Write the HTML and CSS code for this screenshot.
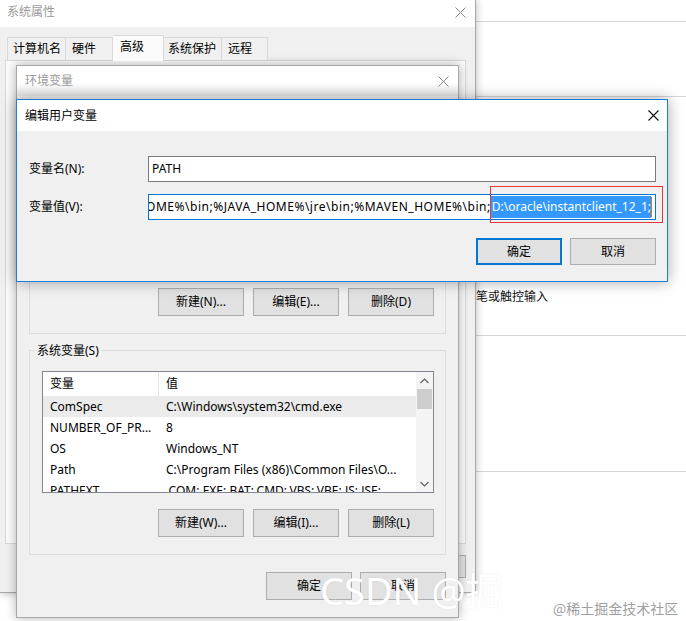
FILE: index.html
```html
<!DOCTYPE html>
<html lang="zh-CN">
<head>
<meta charset="utf-8">
<title>编辑用户变量</title>
<link rel="stylesheet" href="styles.css">
</head>
<body>
<div class="desktop">

  <div class="settings">
    <div class="s-line s1"></div>
    <div class="s-line s2"></div>
    <div class="s-line s3"><span class="s-text">笔或触控输入</span></div>
    <div class="s-line s4"></div>
  </div>

  <div class="win win-sys">
    <div class="titlebar inactive">
      <span>系统属性</span>
      <svg class="xicon" width="11" height="11" viewBox="0 0 11 11"><path d="M0.5 0.5L10.5 10.5M10.5 0.5L0.5 10.5" stroke="#8a8a8a" stroke-width="1"/></svg>
    </div>
    <div class="tabs">
      <div class="tab t1">计算机名</div>
      <div class="tab t2">硬件</div>
      <div class="tab t3 sel">高级</div>
      <div class="tab t4">系统保护</div>
      <div class="tab t5">远程</div>
    </div>
    <div class="panel"></div>
    <div class="sys-foot">
      <div class="btn">应用(A)</div>
    </div>
  </div>

  <div class="win win-env">
    <div class="env-title inactive">
      <span>环境变量</span>
      <svg class="xicon" width="11" height="11" viewBox="0 0 11 11"><path d="M0.5 0.5L10.5 10.5M10.5 0.5L0.5 10.5" stroke="#8a8a8a" stroke-width="1"/></svg>
    </div>
    <div class="env-body">
      <div class="group user-group">
        <div class="btn-row">
          <div class="btn tall">新建(N)...</div>
          <div class="btn tall">编辑(E)...</div>
          <div class="btn tall">删除(D)</div>
        </div>
      </div>
      <div class="group sys-group">
        <span class="legend">系统变量(S)</span>
        <div class="listbox">
          <div class="list-main">
            <div class="lrow head"><div class="c1">变量</div><div class="c2">值</div></div>
            <div class="lrow hl"><div class="c1">ComSpec</div><div class="c2">C:\Windows\system32\cmd.exe</div></div>
            <div class="lrow"><div class="c1">NUMBER_OF_PR...</div><div class="c2">8</div></div>
            <div class="lrow"><div class="c1">OS</div><div class="c2">Windows_NT</div></div>
            <div class="lrow"><div class="c1">Path</div><div class="c2">C:\Program Files (x86)\Common Files\O...</div></div>
            <div class="lrow"><div class="c1">PATHEXT</div><div class="c2">.COM;.EXE;.BAT;.CMD;.VBS;.VBE;.JS;.JSE;...</div></div>
          </div>
          <div class="vscroll">
            <div class="arrow">
              <svg width="9" height="6" viewBox="0 0 9 6"><path d="M0.5 5L4.5 1L8.5 5" fill="none" stroke="#606060" stroke-width="1.2"/></svg>
            </div>
            <div class="thumb"></div>
            <div class="track"></div>
            <div class="arrow">
              <svg width="9" height="6" viewBox="0 0 9 6"><path d="M0.5 1L4.5 5L8.5 1" fill="none" stroke="#606060" stroke-width="1.2"/></svg>
            </div>
          </div>
        </div>
        <div class="btn-row sys-btns">
          <div class="btn tall">新建(W)...</div>
          <div class="btn tall">编辑(I)...</div>
          <div class="btn tall">删除(L)</div>
        </div>
      </div>
      <div class="env-foot">
        <div class="btn tall">确定</div>
        <div class="btn tall">取消</div>
      </div>
    </div>
  </div>

  <div class="win win-edit">
    <div class="edit-title">
      <span>编辑用户变量</span>
      <svg class="xicon" width="11" height="11" viewBox="0 0 11 11"><path d="M0.5 0.5L10.5 10.5M10.5 0.5L0.5 10.5" stroke="#111" stroke-width="1.1"/></svg>
    </div>
    <div class="edit-body">
      <div class="field-grid">
        <label class="flabel">变量名(N):</label>
        <div class="input"><span class="itext">PATH</span></div>
        <label class="flabel">变量值(V):</label>
        <div class="input focus">
          <span class="itext wide">%JAVA_HOME%\bin;%JAVA_HOME%\jre\bin;%MAVEN_HOME%\bin;</span><span class="selected">D:\oracle\instantclient_12_1;</span><span class="caret"></span>
        </div>
      </div>
      <div class="edit-btns">
        <div class="btn def">确定</div>
        <div class="btn">取消</div>
      </div>
    </div>
  </div>

  <div class="redbox"></div>

  <div class="wm">CSDN @掘</div>
  <div class="wm2">@稀土掘金技术社区</div>
</div>
</body>
</html>
```

FILE: styles.css
```css
* { box-sizing: border-box; }

html, body {
  margin: 0;
  padding: 0;
}

body {
  width: 686px;
  height: 621px;
  overflow: hidden;
  background: #fff;
  font-family: "Noto Sans", "Noto Sans CJK SC", sans-serif;
  font-size: 12px;
  line-height: 16px;
  color: #000;
}

.desktop {
  position: relative;
  width: 686px;
  height: 621px;
  overflow: hidden;
}

/* background settings app */
.settings {
  position: absolute;
  left: 476px;
  top: 0;
  width: 210px;
}
.s-line { border-bottom: 1px solid #d6d6d6; }
.s1 { height: 22px; }
.s2 { height: 75px; }
.s3 { height: 239px; padding-top: 192px; }
.s4 { height: 136px; }
.s-text { font-size: 12px; line-height: 16px; color: #111; }

/* generic window */
.win {
  position: absolute;
  background: #f0f0f0;
}
.inactive { color: #9a9a9a; }
.xicon { display: block; }

/* System properties */
.win-sys {
  left: 0;
  top: 0;
  width: 476px;
  height: 593px;
  border-right: 1px solid #a8a8a8;
  border-bottom: 1px solid #a8a8a8;
  box-shadow: 0 0 8px rgba(0, 0, 0, 0.28);
}
.titlebar {
  height: 27px;
  background: #fff;
  display: flex;
  align-items: center;
  justify-content: space-between;
  padding: 0 9px 3px 7px;
}
.tabs {
  display: flex;
  align-items: flex-end;
  height: 24px;
  margin: 9px 0 0 7px;
  position: relative;
  z-index: 1;
}
.tab {
  height: 23px;
  background: #f0f0f0;
  border-top: 1px solid #d9d9d9;
  border-right: 1px solid #d9d9d9;
  display: flex;
  align-items: center;
  white-space: nowrap;
}
.t1 { width: 59px; padding-left: 5px; border-left: 1px solid #d9d9d9; }
.t2 { width: 47px; padding-left: 6px; }
.t3 { width: 51px; padding-left: 7px; }
.t4 { width: 58px; padding-left: 4px; }
.t5 { width: 46px; padding-left: 6px; }
.tab.sel {
  height: 26px;
  margin-bottom: -1px;
  background: #fbfbfb;
  padding-bottom: 4px;
}
.panel {
  margin-left: 5px;
  width: 461px;
  height: 484px;
  border: 1px solid #d9d9d9;
  background: #fbfbfb;
}
.sys-foot {
  display: flex;
  justify-content: flex-end;
  padding: 11px 9px 0 0;
}
.sys-foot .btn { height: 23px; }

/* buttons */
.btn {
  width: 86px;
  height: 27px;
  border: 1px solid #adadad;
  background: #e1e1e1;
  display: flex;
  align-items: center;
  justify-content: center;
  white-space: nowrap;
  color: #000;
}
.btn.tall { height: 28px; }
.btn.def { border: 2px solid #0078d7; }

/* Environment variables */
.win-env {
  left: 16px;
  top: 65px;
  width: 443px;
  height: 553px;
  border: 1px solid #a8a8a8;
  box-shadow: 0 0 10px rgba(0, 0, 0, 0.3);
}
.env-title {
  height: 30px;
  background: linear-gradient(#fff 55%, #e6e6e6);
  display: flex;
  align-items: center;
  justify-content: space-between;
  padding: 0 9px 0 8px;
}
.env-body {
  padding: 10px 12px 0 12px;
}
.group {
  position: relative;
  border: 1px solid #dcdcdc;
}
.user-group {
  height: 228px;
  display: flex;
  flex-direction: column;
  justify-content: flex-end;
  padding: 0 11px 17px 11px;
}
.btn-row {
  display: flex;
  justify-content: flex-end;
  gap: 9px;
}
.sys-group {
  margin-top: 16px;
  padding: 20px 11px 17px 12px;
}
.legend {
  position: absolute;
  left: 5px;
  top: -8px;
  padding: 0 2px;
  background: #f0f0f0;
  line-height: 16px;
}
.listbox {
  height: 122px;
  border: 1px solid #828790;
  background: #fff;
  display: flex;
  overflow: hidden;
}
.list-main {
  flex: 1;
  overflow: hidden;
}
.lrow {
  display: flex;
  height: 21px;
  align-items: center;
  white-space: nowrap;
}
.lrow.head { height: 24px; }
.lrow.hl { background: #ebebeb; }
.c1 {
  width: 116px;
  padding-left: 7px;
  height: 100%;
  display: flex;
  align-items: center;
  overflow: hidden;
}
.c2 {
  padding-left: 7px;
  height: 100%;
  display: flex;
  align-items: center;
}
.head .c1 { border-right: 1px solid #e5e5e5; }
.vscroll {
  width: 17px;
  background: #f4f4f4;
  display: flex;
  flex-direction: column;
}
.arrow {
  height: 17px;
  display: flex;
  align-items: center;
  justify-content: center;
}
.thumb {
  height: 20px;
  margin: 0 1px;
  background: #cdcdcd;
}
.track { flex: 1; }
.sys-btns { margin-top: 16px; }
.env-foot {
  display: flex;
  justify-content: flex-end;
  gap: 8px;
  padding-top: 17px;
}

/* Edit user variable */
.win-edit {
  left: 16px;
  top: 99px;
  width: 652px;
  height: 183px;
  border: 1px solid #1c7fd5;
  box-shadow: 0 0 14px rgba(0, 0, 0, 0.35);
}
.edit-title {
  height: 31px;
  background: #fff;
  display: flex;
  align-items: center;
  justify-content: space-between;
  padding: 0 8px 0 8px;
}
.edit-body {
  padding: 25px 11px 0 12px;
}
.field-grid {
  display: grid;
  grid-template-columns: 119px 1fr;
  row-gap: 12px;
  align-items: center;
}
.flabel { white-space: nowrap; }
.input {
  height: 26px;
  border: 1px solid #7a7a7a;
  background: #fff;
  display: flex;
  align-items: center;
  overflow: hidden;
  white-space: nowrap;
  padding: 0 3px;
}
.input.focus {
  border-color: #0078d7;
  justify-content: flex-end;
  padding-right: 3px;
}
.itext { flex-shrink: 0; }
.itext.wide { letter-spacing: 0.52px; }
.selected {
  flex-shrink: 0;
  background: #3399ff;
  color: #fff;
  height: 22px;
  line-height: 22px;
  padding-left: 1px;
}
.caret {
  flex-shrink: 0;
  width: 1px;
  height: 20px;
  background: #d9751f;
}
.edit-btns {
  display: flex;
  justify-content: flex-end;
  gap: 8px;
  margin-top: 18px;
}

/* annotation */
.redbox {
  position: absolute;
  left: 490px;
  top: 186px;
  width: 173px;
  height: 37px;
  border: 1px solid #e8393a;
}

/* watermarks */
.wm {
  position: absolute;
  left: 320px;
  top: 566px;
  font-family: "Noto Sans", "Noto Sans CJK SC", sans-serif;
  font-size: 38px;
  line-height: 48px;
  color: #fff;
  text-shadow: 0 0 2px rgba(0, 0, 0, 0.07);
  white-space: nowrap;
}
.wm2 {
  position: absolute;
  left: 553px;
  top: 599px;
  font-family: "Noto Sans CJK SC", sans-serif;
  font-size: 14px;
  line-height: 18px;
  color: #a0a0a0;
  white-space: nowrap;
}
```
